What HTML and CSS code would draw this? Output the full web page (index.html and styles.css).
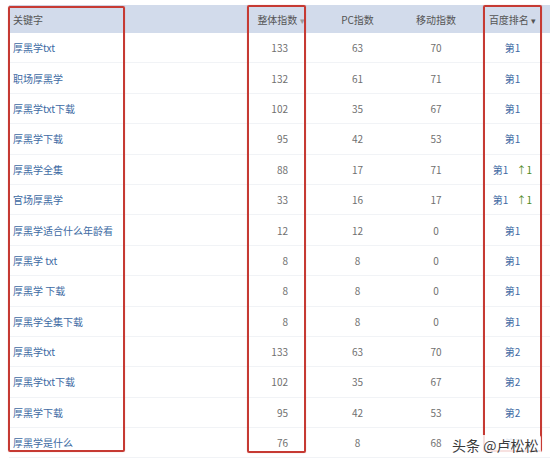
FILE: index.html
```html
<!DOCTYPE html>
<html lang="zh">
<head>
<meta charset="utf-8">
<link rel="stylesheet" href="styles.css">
</head>
<body>
<div class="page">
  <div class="table">
    <div class="row head">
      <div class="c kw">关键字</div>
      <div class="c total">整体指数 <span class="sort light">▾</span></div>
      <div class="c mid">PC指数</div>
      <div class="c mid">移动指数</div>
      <div class="c rank">百度排名 <span class="sort">▾</span></div>
    </div>
    <div class="row"><div class="c kw">厚黑学txt</div><div class="c total">133</div><div class="c mid">63</div><div class="c mid">70</div><div class="c rank">第1</div></div>
    <div class="row"><div class="c kw">职场厚黑学</div><div class="c total">132</div><div class="c mid">61</div><div class="c mid">71</div><div class="c rank">第1</div></div>
    <div class="row"><div class="c kw">厚黑学txt下载</div><div class="c total">102</div><div class="c mid">35</div><div class="c mid">67</div><div class="c rank">第1</div></div>
    <div class="row"><div class="c kw">厚黑学下载</div><div class="c total">95</div><div class="c mid">42</div><div class="c mid">53</div><div class="c rank">第1</div></div>
    <div class="row"><div class="c kw">厚黑学全集</div><div class="c total">88</div><div class="c mid">17</div><div class="c mid">71</div><div class="c rank">第1 <span class="up">↑1</span></div></div>
    <div class="row"><div class="c kw">官场厚黑学</div><div class="c total">33</div><div class="c mid">16</div><div class="c mid">17</div><div class="c rank">第1 <span class="up">↑1</span></div></div>
    <div class="row"><div class="c kw">厚黑学适合什么年龄看</div><div class="c total">12</div><div class="c mid">12</div><div class="c mid">0</div><div class="c rank">第1</div></div>
    <div class="row"><div class="c kw">厚黑学 txt</div><div class="c total">8</div><div class="c mid">8</div><div class="c mid">0</div><div class="c rank">第1</div></div>
    <div class="row"><div class="c kw">厚黑学 下载</div><div class="c total">8</div><div class="c mid">8</div><div class="c mid">0</div><div class="c rank">第1</div></div>
    <div class="row"><div class="c kw">厚黑学全集下载</div><div class="c total">8</div><div class="c mid">8</div><div class="c mid">0</div><div class="c rank">第1</div></div>
    <div class="row"><div class="c kw">厚黑学txt</div><div class="c total">133</div><div class="c mid">63</div><div class="c mid">70</div><div class="c rank">第2</div></div>
    <div class="row"><div class="c kw">厚黑学txt下载</div><div class="c total">102</div><div class="c mid">35</div><div class="c mid">67</div><div class="c rank">第2</div></div>
    <div class="row"><div class="c kw">厚黑学下载</div><div class="c total">95</div><div class="c mid">42</div><div class="c mid">53</div><div class="c rank">第2</div></div>
    <div class="row"><div class="c kw">厚黑学是什么</div><div class="c total">76</div><div class="c mid">8</div><div class="c mid">68</div><div class="c rank">第2</div></div>
  </div>
  <div class="mark m1"></div>
  <div class="mark m2"></div>
  <div class="mark m3"></div>
  <div class="wm">头条 @卢松松</div>
</div>
</body>
</html>
```

FILE: styles.css
```css
html, body {
  margin: 0;
  padding: 0;
  background: #fff;
}
.page {
  position: relative;
  width: 550px;
  height: 462px;
  overflow: hidden;
  padding: 5px 0 0 9px;
  box-sizing: border-box;
  font-family: "Noto Sans CJK SC", "Open Sans", sans-serif;
  font-size: 10px;
}
.table {
  display: flex;
  flex-direction: column;
}
.row {
  display: grid;
  grid-template-columns: 231px 78px 79px 78px 75px;
  height: 30.4px;
  align-items: center;
  border-bottom: 1px solid #f1f3f6;
  box-sizing: border-box;
  color: #6f6f6f;
}
.row.head {
  height: 28px;
  background: #d2dbeb;
  border-bottom: none;
  color: #555;
}
.c {
  white-space: nowrap;
}
.kw {
  padding-left: 4px;
  color: #3d6aa3;
}
.head .kw {
  color: #555;
}
.total {
  text-align: right;
  padding-right: 30px;
}
.head .total {
  text-align: center;
  padding-right: 0;
  padding-left: 4px;
}
.mid {
  text-align: center;
}
.rank {
  text-align: center;
  color: #3d6aa3;
}
.head .rank {
  color: #555;
}
.sort {
  font-size: 9px;
  color: #555;
}
.sort.light {
  color: #999;
}
.up {
  color: #4e8a22;
  margin-left: 6px;
}
.mark {
  position: absolute;
  border: 2px solid #c63a33;
  border-radius: 2px;
  box-shadow: 0 0 1px rgba(198, 58, 51, 0.5);
}
.m1 {
  left: 8px;
  top: 6px;
  width: 113px;
  height: 442px;
}
.m2 {
  left: 247px;
  top: 5px;
  width: 55px;
  height: 444px;
}
.m3 {
  left: 483px;
  top: 5px;
  width: 55px;
  height: 443px;
}
.wm {
  position: absolute;
  left: 449px;
  top: 435px;
  padding: 0 3px;
  white-space: nowrap;
  font-size: 14px;
  line-height: 20px;
  color: #3a3a3a;
  background: rgba(255, 255, 255, 0.85);
  border-radius: 3px;
  text-shadow: 0 0 2px #fff;
  font-family: "Noto Sans CJK SC", sans-serif;
}
```
